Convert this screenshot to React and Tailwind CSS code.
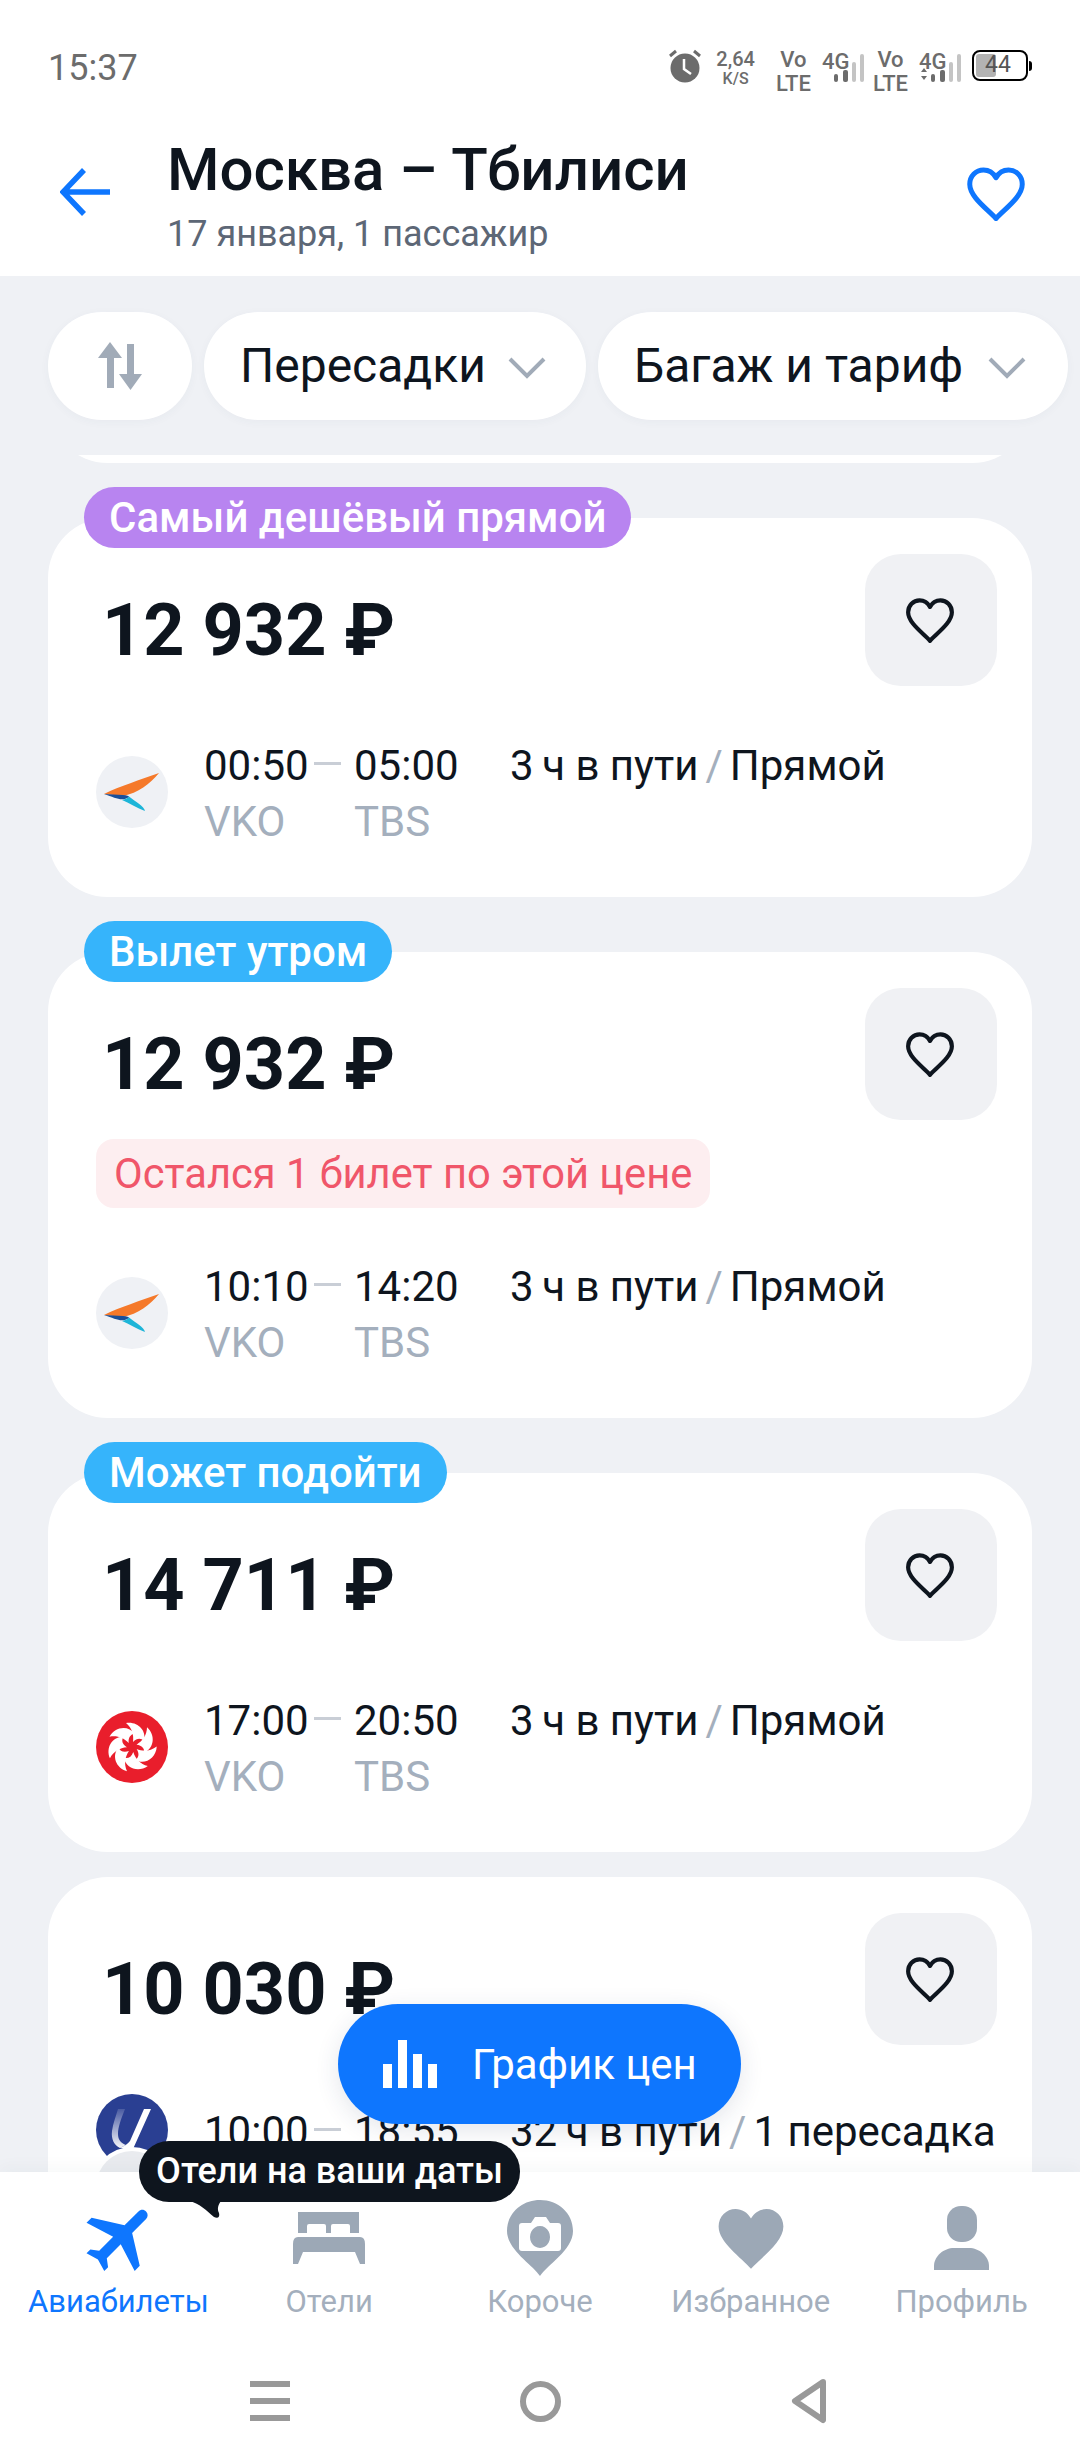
// App.jsx
const HEART = "M12 21C9 17.5 1.5 12.5 1.5 7.3 1.5 4 4 1.6 7 1.6c2 0 3.9 1.1 5 3.1 1.1-2 3-3.1 5-3.1 3 0 5.500 2.400 5.500 5.700C22.500 12.500 15 17.500 12 21z";

const tickets = [
  { price: "12 932 ₽", badge: "Самый дешёвый прямой", badgeColor: "bg-[#b884f0]", from: "00:50", to: "05:00", duration: "3\u2009ч в пути", stops: "Прямой", logo: "wing" },
  { price: "12 932 ₽", badge: "Вылет утром", badgeColor: "bg-[#36b4fb]", warning: "Остался 1 билет по этой цене", from: "10:10", to: "14:20", duration: "3\u2009ч в пути", stops: "Прямой", logo: "wing" },
  { price: "14 711 ₽", badge: "Может подойти", badgeColor: "bg-[#36b4fb]", from: "17:00", to: "20:50", duration: "3\u2009ч в пути", stops: "Прямой", logo: "swirl" },
];

const filters = [
  { label: "Пересадки", pill: "pr-[40px] gap-[22px]" },
  { label: "Багаж и тариф", pill: "pr-[42px] gap-[25px]" },
];

const WingLogo = () => (
  <div className="w-[72px] h-[72px] rounded-full bg-[#eff1f5] shrink-0">
    <svg viewBox="0 0 72 72" className="w-full h-full">
      <path d="M8 38 C24 30 44 24 63 17 C54 28 42 37 27 40 L8 38z" fill="#f5792a" />
      <path d="M8 38 L27 39 C31 39 33 40 33 41 C26 46 20 42 8 38z" fill="#1a4f98" />
      <path d="M26 44 C30 43 32 42 33 40.500 C40 46 48 50 49 55 C41 52 33 47 26 44z" fill="#1db5d8" />
    </svg>
  </div>
);

const SwirlLogo = () => (
  <div className="w-[72px] h-[72px] rounded-full bg-[#e91e2c] shrink-0">
    <svg viewBox="0 0 72 72" className="w-full h-full">
      {[0, 51.4, 102.8, 154.3, 205.7, 257.1, 308.5].map((angle) => (
        <path
          key={angle}
          d="M37 31 C38 24 36 17 30 12 C41 10 51 19 48 30 C45 27 41 27 37 31z"
          fill="#fff"
          transform={`rotate(${angle} 36 36)`}
        />
      ))}
    </svg>
  </div>
);

const UralLogo = () => (
  <div className="w-[72px] shrink-0">
    <div className="w-[72px] h-[72px] rounded-full bg-[#2a3f92]">
      <svg viewBox="0 0 72 72" className="w-full h-full">
        <defs>
          <linearGradient id="uralFade" x1="0" y1="0" x2="0" y2="1">
            <stop offset="0" stopColor="#fff" stopOpacity="0.15" />
            <stop offset="1" stopColor="#fff" stopOpacity="0.95" />
          </linearGradient>
        </defs>
        <path d="M22 15 L29 15 C25 25 22 33 22 40 C22 46 25 49 30 51 L24 54 C18 51 15 45 16 37 C17 29 20 22 22 15z" fill="url(#uralFade)" />
        <path d="M48 15 L55 15 L37 55 L24 54 C28 52 32 50 34 47z" fill="#fff" />
      </svg>
    </div>
    <div className="w-[72px] h-[72px] rounded-full bg-[#e9ebef] -mt-[15px] relative ring-4 ring-white" />
  </div>
);

const CardHeart = () => (
  <div className="w-[132px] h-[132px] rounded-[36px] bg-[#f0f1f4] flex items-center justify-center shrink-0">
    <svg viewBox="0 0 24 22" className="w-[50px] h-[46px] -mt-[1px] -ml-[2px]" fill="none" stroke="#0e151e" strokeWidth="2" strokeLinejoin="round">
      <path d={HEART} />
    </svg>
  </div>
);

const Route = ({ from, to, fromCode = "VKO", toCode = "TBS", duration, stops }) => (
  <div className="text-[42px] leading-[56px] text-[#0e151e] whitespace-nowrap">
    <div className="flex items-center">
      <span className="w-[110px]">{from}</span>
      <span className="w-[27px] h-[3px] bg-[#c9ced6] mr-[13px] -mt-[6px]" />
      <span className="w-[156px]">{to}</span>
      <span>{duration}</span>
      <span className="text-[#a4afbd] mx-[7px]">/</span>
      <span>{stops}</span>
    </div>
    <div className="flex text-[#a4afbd]">
      <span className="w-[150px]">{fromCode}</span>
      <span>{toCode}</span>
    </div>
  </div>
);

const TicketCard = ({ ticket }) => (
  <div className="relative mt-[55px] rounded-[60px] bg-white pl-[48px] pr-[35px] pt-[36px] pb-[47px]">
    <span className={`absolute left-[36px] -top-[31px] h-[61px] px-[25px] rounded-full text-white text-[42px] leading-[61px] font-medium whitespace-nowrap ${ticket.badgeColor}`}>
      {ticket.badge}
    </span>
    <div className="flex justify-between items-start">
      <div className="ml-[6px] mt-[35px] text-[72px] leading-[84px] font-bold text-[#0e151e]">{ticket.price}</div>
      <CardHeart />
    </div>
    {ticket.warning && (
      <div className="mt-[19px] w-fit h-[69px] px-[18px] rounded-[18px] bg-[#fdeef0] text-[#f0566a] text-[41.7px] leading-[69px]">
        {ticket.warning}
      </div>
    )}
    <div className={`flex items-start ${ticket.warning ? "mt-[51px]" : "mt-[52px]"}`}>
      <div className="mt-[18px] mr-[36px]">
        {ticket.logo === "wing" ? <WingLogo /> : <SwirlLogo />}
      </div>
      <Route {...ticket} />
    </div>
  </div>
);

const StackText = ({ top, bottom, topClass = "text-[22px]", bottomClass = "text-[22px]" }) => (
  <div className="flex flex-col items-center font-medium text-[#6c6c6c] leading-none">
    <span className={topClass}>{top}</span>
    <span className={`mt-[2px] ${bottomClass}`}>{bottom}</span>
  </div>
);

const Signal = ({ arrows }) => (
  <div className="w-[44px] flex flex-col items-start">
    <span className="text-[22px] leading-none font-medium text-[#6c6c6c] mt-[2px] ml-[1px]">4G</span>
    <svg viewBox="0 0 44 32" className="w-[44px] h-[32px] -mt-[19px]">
      {arrows && <path d="M3 18l3-4 3 4zM3 22l3 4 3-4z" fill="#6c6c6c" />}
      <rect x="13" y="20" width="4" height="8" rx="2" fill="#6c6c6c" />
      <rect x="22" y="16" width="5" height="12" rx="2" fill="#6c6c6c" />
      <rect x="31" y="8" width="4" height="20" rx="2" fill="#c4c4c4" />
      <rect x="39" y="0" width="4" height="28" rx="2" fill="#c4c4c4" />
    </svg>
  </div>
);

const StatusBar = () => (
  <div className="h-[100px] px-[48px] pt-[48px] flex justify-between items-start">
    <span className="text-[36px] leading-[40px] text-[#6c6c6c]">15:37</span>
    <div className="flex items-start mt-[1px]">
      <svg viewBox="0 0 32 34" className="w-[32px] h-[34px]">
        <circle cx="16" cy="19" r="14.500" fill="#6c6c6c" />
        <path d="M1 7l6-5M31 7l-6-5" stroke="#6c6c6c" strokeWidth="3" />
        <path d="M15 10v10l7 5" stroke="#fff" strokeWidth="2.500" fill="none" />
      </svg>
      <div className="ml-[15px]">
        <StackText top="2,64" bottom="K/S" topClass="text-[20px]" bottomClass="text-[16px]" />
      </div>
      <div className="ml-[21px]">
        <StackText top="Vo" bottom="LTE" />
      </div>
      <div className="ml-[10px]"><Signal /></div>
      <div className="ml-[8px]">
        <StackText top="Vo" bottom="LTE" />
      </div>
      <div className="ml-[10px]"><Signal arrows /></div>
      <div className="flex items-center ml-[10px] mt-[1px]">
        <div className="relative w-[56px] h-[31px] rounded-[8px] border-[2.5px] border-black">
          <div className="absolute left-[2px] top-[2px] bottom-[2px] w-[20px] rounded-[3px] bg-[#b3b3b3]" />
          <span className="absolute left-[11px] top-0 text-[23px] leading-[26px] text-[#555]">44</span>
        </div>
        <div className="w-[3px] h-[10px] ml-[1px] bg-black rounded-r-sm" />
      </div>
    </div>
  </div>
);

const Header = () => (
  <div className="h-[176px] bg-white flex items-start">
    <svg viewBox="0 0 50 48" className="w-[50px] h-[48px] ml-[60px] mt-[68px] shrink-0" fill="none" stroke="#0e76fe" strokeWidth="5.500">
      <path d="M24 2 L3 24 L24 46M3 24h47" />
    </svg>
    <div className="ml-[57px] flex-1">
      <div className="text-[60px] leading-[70px] font-medium text-[#0e151e] mt-[35px]">Москва – Тбилиси</div>
      <div className="text-[36px] leading-[44px] text-[#5d6776] mt-[7px]">17 января, 1 пассажир</div>
    </div>
    <svg viewBox="0 0 24 22" className="w-[60px] h-[55px] mr-[54px] mt-[66px] shrink-0" fill="none" stroke="#0e76fe" strokeWidth="2" strokeLinejoin="round">
      <path d={HEART} />
    </svg>
  </div>
);

const Chevron = () => (
  <svg viewBox="0 0 38 22" className="w-[38px] h-[22px] shrink-0 mt-[3px]" fill="none" stroke="#a1abb8" strokeWidth="4">
    <path d="M2 2l17 17L36 2" />
  </svg>
);

const FilterBar = () => (
  <div className="h-[179px] pt-[36px] pl-[48px] flex gap-[12px] overflow-hidden shrink-0">
    <div className="w-[144px] h-[108px] rounded-full bg-white shadow-[0_2px_10px_rgba(60,70,90,0.04)] flex items-center justify-center shrink-0">
      <svg viewBox="0 0 48 48" className="w-[48px] h-[48px]" fill="#a1abb8">
        <path d="M14 0 L26 16 H18 V46 H11 V16 H2z" />
        <path d="M31 2 H38 V32 H46 L34.500 48 L23 32 H31z" />
      </svg>
    </div>
    {filters.map((filter) => (
      <div key={filter.label} className={`h-[108px] pl-[36px] rounded-full bg-white shadow-[0_2px_10px_rgba(60,70,90,0.04)] flex items-center shrink-0 whitespace-nowrap ${filter.pill}`}>
        <span className="text-[48px] text-[#0e151e]">{filter.label}</span>
        <Chevron />
      </div>
    ))}
    <div className="w-[100px] h-[108px] rounded-l-full bg-white shrink-0" />
  </div>
);

const navItems = [
  {
    label: "Авиабилеты",
    active: true,
    icon: (
      <svg viewBox="0 0 24 24" className="w-[86px] h-[86px] ml-[8px]" fill="#0e76fe">
        <path transform="rotate(45 12 12)" d="M21 16v-2l-8-5V3.500c0-.83-.67-1.500-1.500-1.500S10 2.670 10 3.500V9l-8 5v2l8-2.500V19l-2 1.500V22l3.500-1 3.500 1v-1.500L13 19v-5.500l8 2.500z" />
      </svg>
    ),
  },
  {
    label: "Отели",
    icon: (
      <svg viewBox="0 0 72 52" className="w-[72px] h-[52px]" fill="#9ca8b6">
        <path fillRule="evenodd" d="M5 0H66V21H5zM14 21V14Q14 12 16 12H31Q33 12 33 14V21zM38 21V14Q38 12 40 12H55Q57 12 57 14V21z" />
        <path d="M5 25H67Q72 25 72 32V52H67L62 40H10L5 52H0V32Q0 25 5 25z" />
      </svg>
    ),
  },
  {
    label: "Короче",
    icon: (
      <svg viewBox="0 0 66 76" className="w-[66px] h-[76px]">
        <path d="M33 76C26 65 0 50 0 31 0 13 15 0 33 0s33 13 33 31C66 50 40 65 33 76z" fill="#9ca8b6" />
        <path fillRule="evenodd" d="M15 21h9l4-6h11l4 6h8q3 0 3 3v22q0 3-3 3H15q-3 0-3-3V24q0-3 3-3zM33 24a10 11 0 1 0 .01 0z" fill="#fff" transform="translate(0 2)" />
        <ellipse cx="33" cy="37" rx="7" ry="8" fill="#9ca8b6" />
      </svg>
    ),
  },
  {
    label: "Избранное",
    icon: (
      <svg viewBox="0 0 24 22" className="w-[74px] h-[68px]" fill="#9ca8b6">
        <path d={HEART} />
      </svg>
    ),
  },
  {
    label: "Профиль",
    icon: (
      <svg viewBox="0 0 55 64" className="w-[55px] h-[64px]" fill="#9ca8b6">
        <rect x="13" y="0" width="30" height="36" rx="14" />
        <path d="M0 64V60C0 50 10 42 20 42H35C45 42 55 50 55 60V64z" />
      </svg>
    ),
  },
];

const BottomNav = () => (
  <div className="h-[288px] bg-white shrink-0 relative shadow-[0_-6px_14px_rgba(40,50,70,0.03)]">
    <div className="grid grid-cols-5 px-[13px] pt-[26px]">
      {navItems.map((item) => (
        <div key={item.label} className="flex flex-col items-center">
          <div className="h-[80px] flex items-center justify-center">{item.icon}</div>
          <span className={`mt-[6px] text-[31px] leading-[36px] ${item.active ? "text-[#0e76fe]" : "text-[#a4afbd]"}`}>
            {item.label}
          </span>
        </div>
      ))}
    </div>
    <div className="mt-[58px] flex justify-center items-center gap-[230px] pr-[3px]">
      <div className="w-[40px] flex flex-col gap-[11px]">
        <span className="h-[6px] bg-[#999]" />
        <span className="h-[6px] bg-[#999]" />
        <span className="h-[6px] bg-[#999]" />
      </div>
      <div className="w-[41px] h-[41px] rounded-full border-[6px] border-[#999]" />
      <svg viewBox="0 0 36 46" className="w-[36px] h-[46px]" fill="none" stroke="#999" strokeWidth="6" strokeLinejoin="round">
        <path d="M32 4 L4 23 L32 42z" />
      </svg>
    </div>
  </div>
);

export default function App() {
  return (
    <div className="relative w-[1080px] h-[2460px] overflow-hidden bg-[#eff1f5] flex flex-col font-['Roboto',sans-serif]">
      <div className="bg-white shrink-0">
        <StatusBar />
        <Header />
      </div>
      <FilterBar />

      {/* Ticket list, cut off at the bottom by the nav */}
      <div className="flex-1 overflow-hidden px-[48px]">
        <div className="h-[8px] overflow-hidden flex items-end">
          <div className="w-full h-[120px] rounded-[60px] bg-white shrink-0" />
        </div>
        {tickets.map((ticket, i) => (
          <TicketCard key={i} ticket={ticket} />
        ))}
        <div className="mt-[25px] rounded-[60px] bg-white pl-[48px] pr-[35px] pt-[36px] pb-[47px]">
          <div className="flex justify-between items-start">
            <div className="ml-[6px] mt-[35px] text-[72px] leading-[84px] font-bold text-[#0e151e]">10 030 ₽</div>
            <CardHeart />
          </div>
          <div className="mt-[49px] flex items-start">
            <div className="mr-[36px]"><UralLogo /></div>
            <div className="mt-[10px]">
              <Route from="10:00" to="18:55" duration="32&#8201;ч в пути" stops="1 пересадка" />
            </div>
          </div>
        </div>
      </div>
      <BottomNav />

      {/* Floating price chart button */}
      <div className="absolute left-[338px] top-[2004px] w-[403px] h-[120px] rounded-[60px] bg-[#0e76fe] shadow-[0_6px_24px_rgba(30,50,90,0.12)] flex items-center pl-[45px]">
        <svg viewBox="0 0 54 48" className="w-[54px] h-[48px] shrink-0" fill="#fff">
          <rect x="0" y="24" width="9" height="24" />
          <rect x="15" y="0" width="9" height="48" />
          <rect x="30" y="14" width="9" height="34" />
          <rect x="45" y="24" width="9" height="24" />
        </svg>
        <span className="ml-[35px] text-[42px] text-white whitespace-nowrap">График цен</span>
      </div>

      {/* Hotels tooltip */}
      <div className="absolute left-[139px] top-[2141px] w-[381px] h-[61px] rounded-[30px] bg-[#0e151e] text-white text-[36px] leading-[61px] font-medium text-center whitespace-nowrap">
        Отели на ваши даты
        <svg viewBox="0 0 32 20" className="absolute left-[50px] top-[58px] w-[32px] h-[20px]" fill="#0e151e">
          <path d="M0 2 C10 4 18 12 25 18 C29 20 31 18 30 14 C28 10 29 6 32 2z" />
        </svg>
      </div>
    </div>
  );
}
